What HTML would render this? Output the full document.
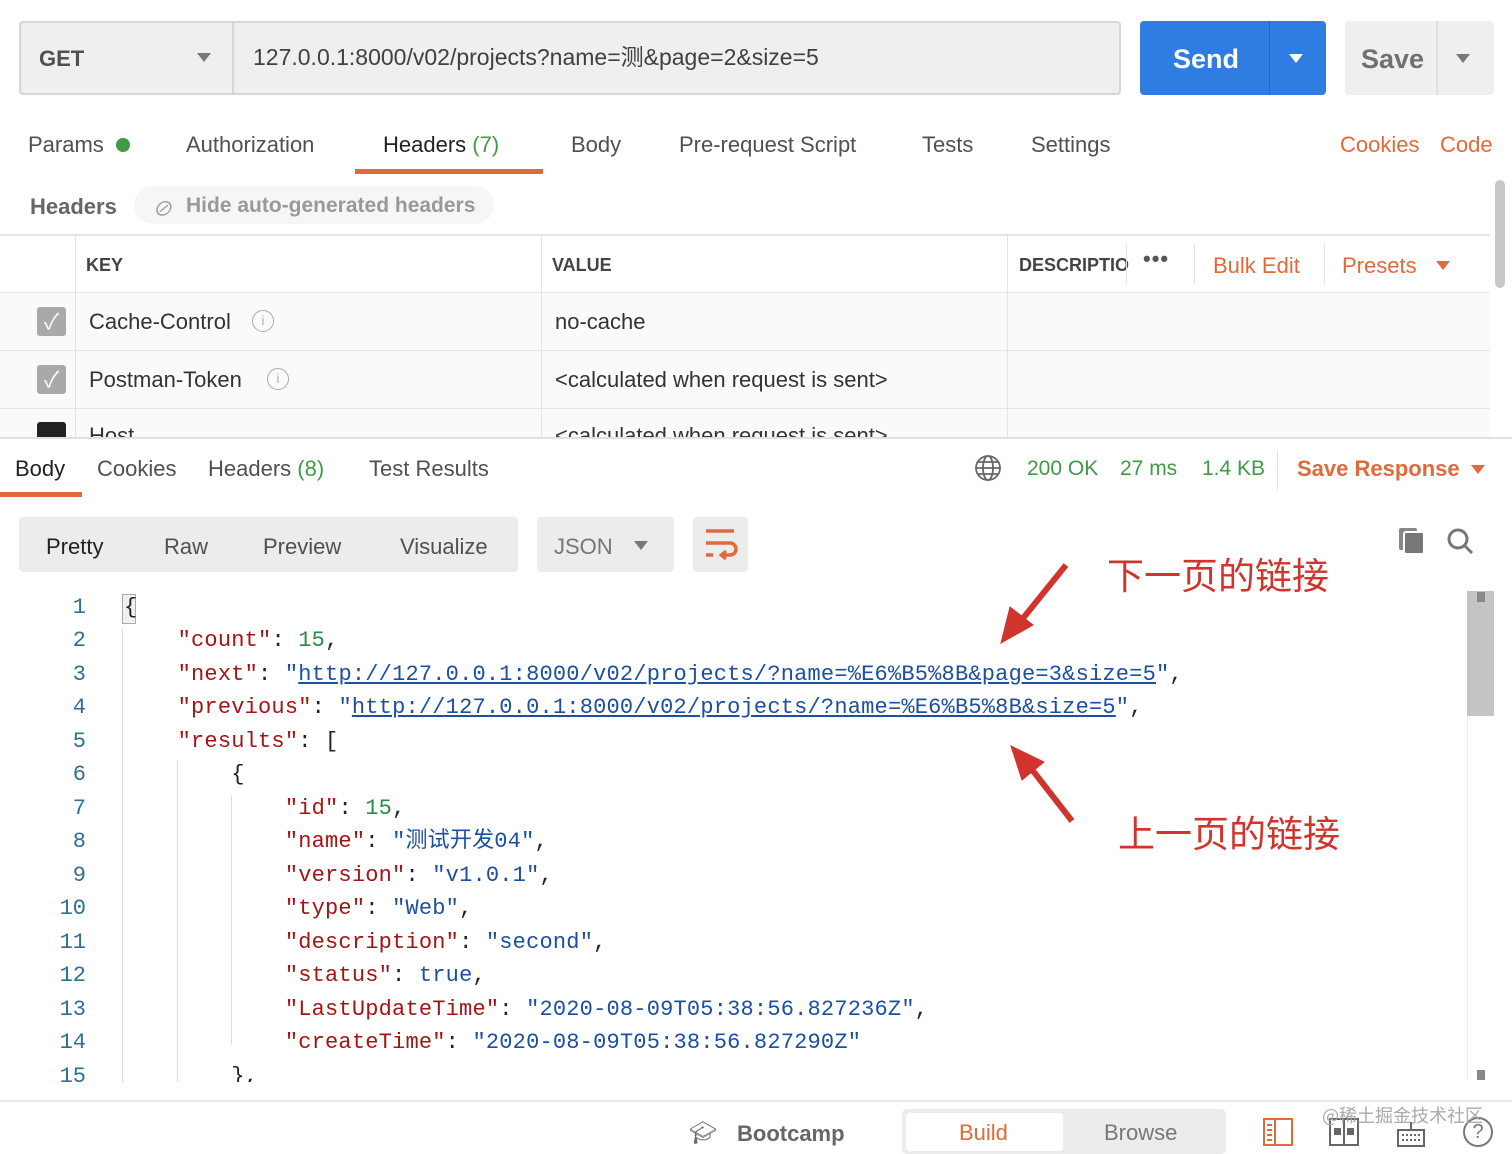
<!DOCTYPE html>
<html><head><meta charset="utf-8"><style>
*{margin:0;padding:0;box-sizing:border-box}
body{width:1512px;height:1154px;position:relative;background:#fff;font-family:"Liberation Sans","Noto Sans CJK SC",sans-serif;color:#505050;overflow:hidden}
.a{position:absolute;white-space:nowrap}
.t{font-size:22px;color:#505050}
.or{color:#e06a3a}
.gr{color:#3f9b45}
.code{position:absolute;left:0;top:590px;font-family:"Liberation Mono","Noto Sans CJK SC",monospace;font-size:22px}
.ln{position:absolute;width:86px;text-align:right;color:#2f6f8f;height:33px;line-height:33px}
.cl{position:absolute;left:124px;white-space:pre;color:#222;height:33px;line-height:33px;letter-spacing:0.2px}
.k{color:#a31515}.s{color:#1c4fa0}.n{color:#2a8a4a}.u{text-decoration:underline;text-decoration-color:#1c4fa0}
.hl{position:absolute;top:293px;left:0;width:1490px;height:1px;background:#e6e6e6}
</style></head><body>
<!-- top bar -->
<div class="a" style="left:19px;top:21px;width:1102px;height:74px;border:2px solid #d6d6d6;border-radius:4px;background:#efefef"></div>
<div class="a" style="left:232px;top:22px;width:2px;height:72px;background:#d6d6d6"></div>
<div class="a" style="left:39px;top:46px;font-size:22px;font-weight:bold;color:#505050">GET</div>
<div class="a" style="left:197px;top:53px;width:0;height:0;border-left:7px solid transparent;border-right:7px solid transparent;border-top:9px solid #777"></div>
<div class="a" style="left:253px;top:44px;font-size:23px;color:#404040;line-height:26px">127.0.0.1:8000/v02/projects?name=测&amp;page=2&amp;size=5</div>
<div class="a" style="left:1140px;top:21px;width:186px;height:74px;background:#2f7de0;border-radius:4px"></div>
<div class="a" style="left:1269px;top:21px;width:1px;height:74px;background:#2466c0"></div>
<div class="a" style="left:1173px;top:44px;font-size:27px;font-weight:bold;color:#fff">Send</div>
<div class="a" style="left:1289px;top:54px;border-left:7px solid transparent;border-right:7px solid transparent;border-top:9px solid #fff"></div>
<div class="a" style="left:1345px;top:21px;width:149px;height:74px;background:#efefef;border-radius:4px"></div>
<div class="a" style="left:1436px;top:21px;width:2px;height:74px;background:#e0e0e0"></div>
<div class="a" style="left:1361px;top:44px;font-size:27px;font-weight:bold;color:#707070">Save</div>
<div class="a" style="left:1456px;top:54px;border-left:7px solid transparent;border-right:7px solid transparent;border-top:9px solid #777"></div>
<!-- tabs -->
<div class="a t" style="left:28px;top:132px">Params</div>
<div class="a" style="left:116px;top:138px;width:14px;height:14px;border-radius:7px;background:#3f9b45"></div>
<div class="a t" style="left:186px;top:132px">Authorization</div>
<div class="a t" style="left:383px;top:132px;color:#222">Headers <span class="gr">(7)</span></div>
<div class="a" style="left:355px;top:169px;width:188px;height:5px;background:#e06a3a"></div>
<div class="a t" style="left:571px;top:132px">Body</div>
<div class="a t" style="left:679px;top:132px">Pre-request Script</div>
<div class="a t" style="left:922px;top:132px">Tests</div>
<div class="a t" style="left:1031px;top:132px">Settings</div>
<div class="a t or" style="left:1340px;top:132px">Cookies</div>
<div class="a t or" style="left:1440px;top:132px">Code</div>
<div class="a t" style="left:30px;top:194px;font-weight:bold;color:#666">Headers</div>
<div class="a" style="left:134px;top:186px;width:360px;height:38px;border-radius:19px;background:#f6f6f6"></div>
<div class="a" style="left:152px;top:193px;font-size:20px;color:#999;font-style:italic">⊘</div>
<div class="a" style="left:186px;top:194px;font-size:21px;font-weight:bold;color:#999">Hide auto-generated headers</div>
<!-- scrollbar -->
<div class="a" style="left:1495px;top:180px;width:10px;height:108px;background:#c8c8c8;border-radius:5px"></div>
<!-- table -->
<div class="a" style="left:0;top:234px;width:1490px;height:2px;background:#e4e4e4"></div>
<div class="a" style="left:0;top:292px;width:1490px;height:145px;background:#fafafa"></div>
<div class="hl" style="top:292px"></div>
<div class="hl" style="top:350px"></div>
<div class="hl" style="top:408px"></div>
<div class="a" style="left:75px;top:236px;width:1px;height:201px;background:#e4e4e4"></div>
<div class="a" style="left:541px;top:236px;width:1px;height:201px;background:#e4e4e4"></div>
<div class="a" style="left:1007px;top:236px;width:1px;height:201px;background:#e4e4e4"></div>
<div class="a" style="left:86px;top:255px;font-size:18px;font-weight:bold;color:#444">KEY</div>
<div class="a" style="left:552px;top:255px;font-size:18px;font-weight:bold;color:#444">VALUE</div>
<div class="a" style="left:1019px;top:255px;font-size:18px;font-weight:bold;color:#444">DESCRIPTIO</div>
<div class="a" style="left:1126px;top:244px;width:1px;height:40px;background:#e4e4e4"></div>
<div class="a" style="left:1143px;top:246px;font-size:22px;font-weight:bold;color:#555;letter-spacing:1px">•••</div>
<div class="a" style="left:1194px;top:244px;width:1px;height:40px;background:#e4e4e4"></div>
<div class="a t or" style="left:1213px;top:253px">Bulk Edit</div>
<div class="a" style="left:1324px;top:244px;width:1px;height:40px;background:#e4e4e4"></div>
<div class="a t or" style="left:1342px;top:253px">Presets</div>
<div class="a" style="left:1436px;top:261px;border-left:7px solid transparent;border-right:7px solid transparent;border-top:9px solid #e06a3a"></div>
<div class="a" style="left:37px;top:307px;width:29px;height:29px;background:#a9a9a9;border-radius:3px;color:#fff;font-size:22px;text-align:center;line-height:29px">✓</div>
<div class="a" style="left:37px;top:365px;width:29px;height:29px;background:#a9a9a9;border-radius:3px;color:#fff;font-size:22px;text-align:center;line-height:29px">✓</div>
<div class="a" style="left:37px;top:422px;width:29px;height:15px;background:#222;border-radius:3px 3px 0 0"></div>
<div class="a t" style="left:89px;top:309px;color:#333">Cache-Control</div>
<div class="a" style="left:252px;top:310px;width:22px;height:22px;border:1.5px solid #aaa;border-radius:11px;font-size:13px;color:#aaa;text-align:center;line-height:19px">i</div>
<div class="a t" style="left:89px;top:367px;color:#333">Postman-Token</div>
<div class="a" style="left:267px;top:368px;width:22px;height:22px;border:1.5px solid #aaa;border-radius:11px;font-size:13px;color:#aaa;text-align:center;line-height:19px">i</div>
<div class="a" style="left:0;top:420px;width:1490px;height:17px;overflow:hidden">
<div class="a t" style="left:89px;top:3px;color:#333">Host</div>
<div class="a t" style="left:555px;top:3px;color:#333">&lt;calculated when request is sent&gt;</div></div>
<div class="a t" style="left:555px;top:309px;color:#333">no-cache</div>
<div class="a t" style="left:555px;top:367px;color:#333">&lt;calculated when request is sent&gt;</div>
<div class="a" style="left:0;top:437px;width:1512px;height:2px;background:#e0e0e0"></div>
<!-- response tabs -->
<div class="a t" style="left:15px;top:456px;color:#222">Body</div>
<div class="a" style="left:0;top:492px;width:82px;height:5px;background:#e06a3a"></div>
<div class="a t" style="left:97px;top:456px">Cookies</div>
<div class="a t" style="left:208px;top:456px">Headers <span class="gr">(8)</span></div>
<div class="a t" style="left:369px;top:456px">Test Results</div>
<svg class="a" style="left:974px;top:454px" width="28" height="28" viewBox="0 0 28 28" fill="none" stroke="#666" stroke-width="1.8"><circle cx="14" cy="14" r="12"/><ellipse cx="14" cy="14" rx="5" ry="12"/><line x1="2" y1="14" x2="26" y2="14"/><line x1="4" y1="8" x2="24" y2="8"/><line x1="4" y1="20" x2="24" y2="20"/></svg>
<div class="a t gr" style="left:1027px;top:457px;font-size:21px">200 OK</div>
<div class="a t gr" style="left:1120px;top:457px;font-size:21px">27 ms</div>
<div class="a t gr" style="left:1202px;top:457px;font-size:21px">1.4 KB</div>
<div class="a" style="left:1277px;top:450px;width:1px;height:40px;background:#e4e4e4"></div>
<div class="a t or" style="left:1297px;top:456px;font-weight:bold">Save Response</div>
<div class="a" style="left:1471px;top:465px;border-left:7px solid transparent;border-right:7px solid transparent;border-top:9px solid #e06a3a"></div>
<!-- toolbar -->
<div class="a" style="left:19px;top:517px;width:499px;height:55px;background:#ececec;border-radius:4px"></div>
<div class="a t" style="left:46px;top:534px;color:#222">Pretty</div>
<div class="a t" style="left:164px;top:534px">Raw</div>
<div class="a t" style="left:263px;top:534px">Preview</div>
<div class="a t" style="left:400px;top:534px">Visualize</div>
<div class="a" style="left:537px;top:517px;width:137px;height:55px;background:#ececec;border-radius:4px"></div>
<div class="a t" style="left:554px;top:534px;color:#777">JSON</div>
<div class="a" style="left:634px;top:541px;border-left:7px solid transparent;border-right:7px solid transparent;border-top:9px solid #777"></div>
<div class="a" style="left:693px;top:517px;width:55px;height:55px;background:#ececec;border-radius:4px"></div>
<svg class="a" style="left:704px;top:528px" width="34" height="32" viewBox="0 0 34 32" fill="none" stroke="#e06a3a" stroke-width="3.5"><line x1="2" y1="3" x2="30" y2="3"/><path d="M2 15 H26 a6 6 0 0 1 0 12 H18"/><path d="M22 23 l-5 4 l5 4" stroke-width="3"/><line x1="2" y1="27" x2="9" y2="27"/></svg>
<svg class="a" style="left:1397px;top:526px" width="30" height="30" viewBox="0 0 30 30"><rect x="2" y="2" width="18" height="22" rx="2" fill="#888"/><rect x="7" y="6" width="20" height="22" rx="2" fill="#777" stroke="#fff" stroke-width="2"/></svg>
<svg class="a" style="left:1445px;top:526px" width="30" height="30" viewBox="0 0 30 30" fill="none" stroke="#777" stroke-width="3"><circle cx="13" cy="13" r="9"/><line x1="20" y1="20" x2="27" y2="27"/></svg>
<!-- code scrollbar -->
<div class="a" style="left:1467px;top:590px;width:27px;height:490px;border-left:1px solid #eee"></div>
<div class="a" style="left:1467px;top:591px;width:27px;height:125px;background:#c4c4c4"></div>
<div class="a" style="left:1477px;top:592px;width:8px;height:10px;background:#888"></div>
<div class="a" style="left:1477px;top:1070px;width:8px;height:10px;background:#888"></div>
<!-- code -->
<div class="a" style="left:0;top:590px;width:1466px;height:492px;overflow:hidden">
<div class="a" style="left:122px;top:4px;width:14px;height:30px;border:1px solid #aaa;background:#f0f0f0"></div>
<div class="a" style="left:122px;top:38px;width:1px;height:460px;background:#ddd"></div>
<div class="a" style="left:177px;top:170px;width:1px;height:330px;background:#ddd"></div>
<div class="a" style="left:231px;top:205px;width:1px;height:250px;background:#ddd"></div>
<div class="code" style="top:0;left:0">
<div class="ln" style="top:1px">1</div><div class="ln" style="top:34px">2</div><div class="ln" style="top:68px">3</div><div class="ln" style="top:101px">4</div><div class="ln" style="top:135px">5</div><div class="ln" style="top:168px">6</div><div class="ln" style="top:202px">7</div><div class="ln" style="top:235px">8</div><div class="ln" style="top:269px">9</div><div class="ln" style="top:302px">10</div><div class="ln" style="top:336px">11</div><div class="ln" style="top:369px">12</div><div class="ln" style="top:403px">13</div><div class="ln" style="top:436px">14</div><div class="ln" style="top:470px">15</div>
<div class="cl" style="top:1px">{</div>
<div class="cl" style="top:34px">    <span class="k">"count"</span>: <span class="n">15</span>,</div>
<div class="cl" style="top:68px">    <span class="k">"next"</span>: <span class="s">"<span class="u">http://127.0.0.1:8000/v02/projects/?name=%E6%B5%8B&amp;page=3&amp;size=5</span>"</span>,</div>
<div class="cl" style="top:101px">    <span class="k">"previous"</span>: <span class="s">"<span class="u">http://127.0.0.1:8000/v02/projects/?name=%E6%B5%8B&amp;size=5</span>"</span>,</div>
<div class="cl" style="top:135px">    <span class="k">"results"</span>: [</div>
<div class="cl" style="top:168px">        {</div>
<div class="cl" style="top:202px">            <span class="k">"id"</span>: <span class="n">15</span>,</div>
<div class="cl" style="top:235px">            <span class="k">"name"</span>: <span class="s">"测试开发04"</span>,</div>
<div class="cl" style="top:269px">            <span class="k">"version"</span>: <span class="s">"v1.0.1"</span>,</div>
<div class="cl" style="top:302px">            <span class="k">"type"</span>: <span class="s">"Web"</span>,</div>
<div class="cl" style="top:336px">            <span class="k">"description"</span>: <span class="s">"second"</span>,</div>
<div class="cl" style="top:369px">            <span class="k">"status"</span>: <span class="s">true</span>,</div>
<div class="cl" style="top:403px">            <span class="k">"LastUpdateTime"</span>: <span class="s">"2020-08-09T05:38:56.827236Z"</span>,</div>
<div class="cl" style="top:436px">            <span class="k">"createTime"</span>: <span class="s">"2020-08-09T05:38:56.827290Z"</span></div>
<div class="cl" style="top:470px">        },</div>
</div></div>
<!-- annotations -->
<div class="a" style="left:1107px;top:546px;font-size:37px;color:#d0342c;font-family:'Noto Sans CJK SC',sans-serif">下一页的链接</div>
<div class="a" style="left:1118px;top:804px;font-size:37px;color:#d0342c;font-family:'Noto Sans CJK SC',sans-serif">上一页的链接</div>
<svg class="a" style="left:0;top:0" width="1512" height="1154"><g stroke="#d0342c" stroke-width="6" fill="#d0342c"><line x1="1066" y1="565" x2="1020" y2="622"/><polygon points="1001,643 1010,607 1033,625" stroke-width="1"/><line x1="1072" y1="821" x2="1030" y2="767"/><polygon points="1011,746 1044,762 1022,780" stroke-width="1"/></g></svg>
<!-- footer -->
<div class="a" style="left:0;top:1100px;width:1512px;height:2px;background:#e8e8e8"></div>
<div class="a" style="left:689px;top:1120px;font-size:22px;color:#666">🎓︎</div>
<div class="a t" style="left:737px;top:1121px;font-weight:bold;color:#666">Bootcamp</div>
<div class="a" style="left:902px;top:1109px;width:324px;height:45px;background:#ececec;border-radius:5px"></div>
<div class="a" style="left:906px;top:1113px;width:157px;height:38px;background:#fff;border-radius:4px"></div>
<div class="a t or" style="left:959px;top:1120px">Build</div>
<div class="a t" style="left:1104px;top:1120px;color:#777">Browse</div>
<svg class="a" style="left:1262px;top:1117px" width="32" height="30" viewBox="0 0 32 30" fill="none" stroke="#e06a3a" stroke-width="2"><rect x="2" y="2" width="28" height="26"/><line x1="13" y1="2" x2="13" y2="28"/><line x1="5" y1="8" x2="10" y2="8"/><line x1="5" y1="13" x2="10" y2="13"/><line x1="5" y1="18" x2="10" y2="18"/><line x1="5" y1="23" x2="10" y2="23"/></svg>
<svg class="a" style="left:1328px;top:1115px" width="32" height="32" viewBox="0 0 32 32" fill="none" stroke="#666" stroke-width="2"><rect x="2" y="4" width="28" height="26"/><line x1="16" y1="4" x2="16" y2="30"/><rect x="7" y="14" width="5" height="5" fill="#666"/><rect x="20" y="14" width="5" height="5" fill="#666"/></svg>
<svg class="a" style="left:1396px;top:1122px" width="30" height="26" viewBox="0 0 30 26" fill="none" stroke="#666" stroke-width="2"><rect x="2" y="8" width="26" height="16"/><line x1="15" y1="0" x2="15" y2="8"/><line x1="6" y1="13" x2="24" y2="13" stroke-dasharray="2 2"/><line x1="6" y1="18" x2="24" y2="18" stroke-dasharray="2 2"/></svg>
<div class="a" style="left:1463px;top:1117px;width:30px;height:30px;border:2px solid #777;border-radius:15px;text-align:center;font-size:20px;line-height:26px;color:#777">?</div>
<div class="a" style="left:1322px;top:1102px;font-size:18px;color:#aaa;font-family:'Noto Sans CJK SC',sans-serif">@稀土掘金技术社区</div>
</body></html>
